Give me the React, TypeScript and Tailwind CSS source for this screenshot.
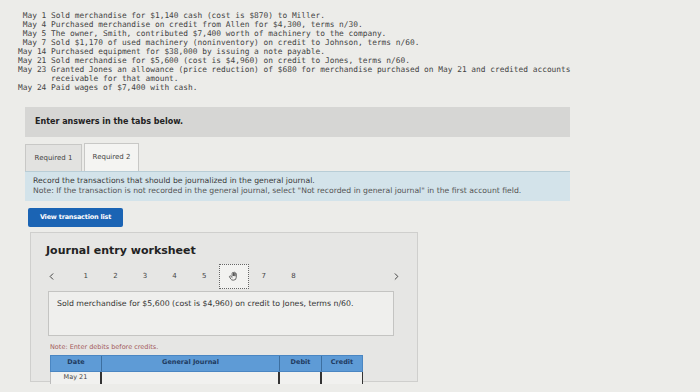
import { ChevronLeft, ChevronRight } from 'lucide-react';

const lines = [
  ' May 1 Sold merchandise for $1,140 cash (cost is $870) to Miller.',
  ' May 4 Purchased merchandise on credit from Allen for $4,300, terms n/30.',
  ' May 5 The owner, Smith, contributed $7,400 worth of machinery to the company.',
  ' May 7 Sold $1,170 of used machinery (noninventory) on credit to Johnson, terms n/60.',
  'May 14 Purchased equipment for $38,000 by issuing a note payable.',
  'May 21 Sold merchandise for $5,600 (cost is $4,960) on credit to Jones, terms n/60.',
  'May 23 Granted Jones an allowance (price reduction) of $680 for merchandise purchased on May 21 and credited accounts',
  '       receivable for that amount.',
  'May 24 Paid wages of $7,400 with cash.',
];

const pages = ['1', '2', '3', '4', '5', '6', '7', '8'];

function HandIcon() {
  return (
    <svg width="11" height="11" viewBox="0 0 24 24" fill="none" stroke="#555" strokeWidth="2" strokeLinecap="round" strokeLinejoin="round">
      <path d="M9 11V5a1.5 1.5 0 0 1 3 0v5" />
      <path d="M12 10V4a1.5 1.5 0 0 1 3 0v6" />
      <path d="M15 10.5V6a1.5 1.5 0 0 1 3 0v8a6 6 0 0 1-6 6h-1a6 6 0 0 1-5-2.7L3.5 13a1.5 1.5 0 0 1 2.5-1.7L9 14" />
    </svg>
  );
}

export default function App() {
  const sans = { fontFamily: '"DejaVu Sans", Verdana, sans-serif' };

  return (
    <div className="w-[700px] h-[392px] overflow-hidden bg-[#ecece9] text-[#333]" style={sans}>
      <div
        className="pt-[11px] pl-[18px] text-[7.85px] leading-[9px] whitespace-pre text-[#444]"
        style={{ fontFamily: '"DejaVu Sans Mono", "Liberation Mono", monospace' }}
      >
        {lines.map((l, i) => (
          <div key={i}>{l}</div>
        ))}
      </div>

      <div className="ml-[25px] w-[545px] mt-[15px]">
        <div className="h-[30px] bg-[#d6d6d4] flex items-center pl-[10px] text-[8px] font-bold text-[#222]">
          Enter answers in the tabs below.
        </div>

        <div className="flex mt-[6px] gap-[2px] h-[28px] items-end">
          <div className="w-[57px] h-[27px] bg-[#e2e2e0] border border-[#c8c8c6] border-b-0 flex items-center justify-center text-[7px] text-[#444]">
            Required 1
          </div>
          <div className="w-[55px] h-[28px] bg-[#f4f4f2] border border-[#c8c8c6] border-b-0 flex items-center justify-center text-[7px] text-[#444]">
            Required 2
          </div>
        </div>

        <div className="h-[30px] bg-[#d3e3ea] border-t border-[#b8cdd6] pl-[8px] pt-[4px] text-[7.7px] leading-[10px] text-[#3a3a3a]">
          <div>Record the transactions that should be journalized in the general journal.</div>
          <div className="text-[#555]">
            Note: If the transaction is not recorded in the general journal, select "Not recorded in general journal" in the first account field.
          </div>
        </div>

        <div className="mt-[7px] ml-[3px] w-[95px] h-[19px] bg-[#1b64b4] rounded-[2px] flex items-center justify-center text-[6.5px] font-bold text-white tracking-[-0.2px]">
          View transaction list
        </div>
      </div>

      <div className="ml-[30px] mt-[5px] w-[388px] h-[150px] bg-[#e6e6e4] border border-[#cfcfcd] pl-[15px] pt-[11px]">
        <div className="text-[11px] font-bold text-[#222] leading-[14px]">Journal entry worksheet</div>

        <div className="flex items-center mt-[6px] h-[25px] relative">
          <ChevronLeft size={11} strokeWidth={2} className="text-[#333]" />
          <div className="flex items-center ml-[14px]">
            {pages.map((p) =>
              p === '6' ? (
                <div key={p} className="w-[30px] h-[25px] border border-dotted border-[#666] bg-[#f2f2f0] flex items-center justify-center">
                  <HandIcon />
                </div>
              ) : (
                <div key={p} className="w-[29.6px] text-[7px] text-[#444] text-center">
                  {p}
                </div>
              )
            )}
          </div>
          <ChevronRight size={11} strokeWidth={2} className="text-[#333] absolute left-[345px]" />
        </div>

        <div className="mt-[2px] ml-[2px] w-[346px] h-[45px] bg-[#efefed] border border-[#c4c4c2] pl-[8px] pt-[6px] text-[7.8px] text-[#333]">
          Sold merchandise for $5,600 (cost is $4,960) on credit to Jones, terms n/60.
        </div>

        <div className="mt-[7px] ml-[4px] text-[6.5px] text-[#a35a5a]">Note: Enter debits before credits.</div>

        <div className="mt-[2px] ml-[4px] w-[313px] text-[6.5px] font-bold text-[#1f3a60]">
          <div className="flex h-[17px] bg-[#5e9bd6] border border-[#4a86c2]">
            <div className="w-[50px] flex items-center justify-center">Date</div>
            <div className="w-[178px] flex items-center justify-center border-l border-[#3d6fa0]">General Journal</div>
            <div className="w-[42px] flex items-center justify-center border-l border-[#3d6fa0]">Debit</div>
            <div className="flex-1 flex items-center justify-center border-l border-[#3d6fa0]">Credit</div>
          </div>
          <div className="flex h-[12px] bg-[#f1f1ef] font-normal text-[#444]">
            <div className="w-[50px] flex items-center justify-center border-l border-[#bbb]">May 21</div>
            <div className="w-[178px] border-l-2 border-[#333]"></div>
            <div className="w-[42px] border-l-2 border-[#333]"></div>
            <div className="flex-1 border-l-2 border-[#333] border-r border-r-[#333]"></div>
          </div>
        </div>
      </div>
    </div>
  );
}
